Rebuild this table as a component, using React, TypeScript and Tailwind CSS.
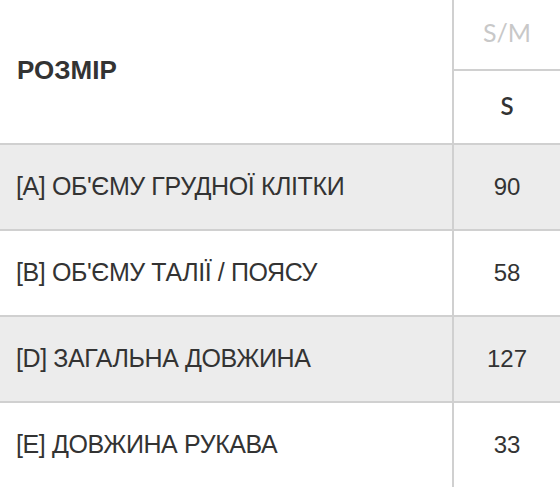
const ROWS = [
  { label: "[A] ОБ'ЄМУ ГРУДНОЇ КЛІТКИ", value: "90" },
  { label: "[B] ОБ'ЄМУ ТАЛІЇ / ПОЯСУ", value: "58" },
  { label: "[D] ЗАГАЛЬНА ДОВЖИНА", value: "127" },
  { label: "[E] ДОВЖИНА РУКАВА", value: "33" },
];

const arial = "font-['Liberation_Sans',Arial,sans-serif]";
const lato = "font-['Lato','Noto_Sans',sans-serif]";

export default function App() {
  return (
    <div className="w-[560px] overflow-hidden bg-white text-[#333]">
      <div className="flex border-b-2 border-[#d0d0d0]">
        <div className="flex h-[143px] w-[454px] shrink-0 items-center border-r-2 border-[#d0d0d0] pb-[3px] pl-[17px]">
          <span className={`${arial} text-[26px] font-bold text-[#333]`}>РОЗМІР</span>
        </div>
        <div className="flex flex-1 flex-col">
          <div className={`${lato} flex h-[71px] items-center justify-center border-b-2 border-[#d0d0d0] pb-[3px] text-[25px] text-[#c8c8c8]`}>
            S/M
          </div>
          <div className={`${lato} flex h-[70px] items-center justify-center text-[24px] font-semibold text-[#333]`}>
            S
          </div>
        </div>
      </div>
      {ROWS.map((r, i) => (
        <div
          key={r.label}
          className={`flex border-b-2 border-[#d0d0d0] ${i % 2 === 0 ? "bg-[#ececec]" : "bg-white"}`}
        >
          <div className="flex h-[84px] w-[454px] shrink-0 items-center border-r-2 border-[#d0d0d0] pl-[16px]">
            <span className={`${arial} text-[25px] tracking-[-0.4px]`}>{r.label}</span>
          </div>
          <div className={`${arial} flex flex-1 items-center justify-center text-[24px]`}>{r.value}</div>
        </div>
      ))}
    </div>
  );
}
